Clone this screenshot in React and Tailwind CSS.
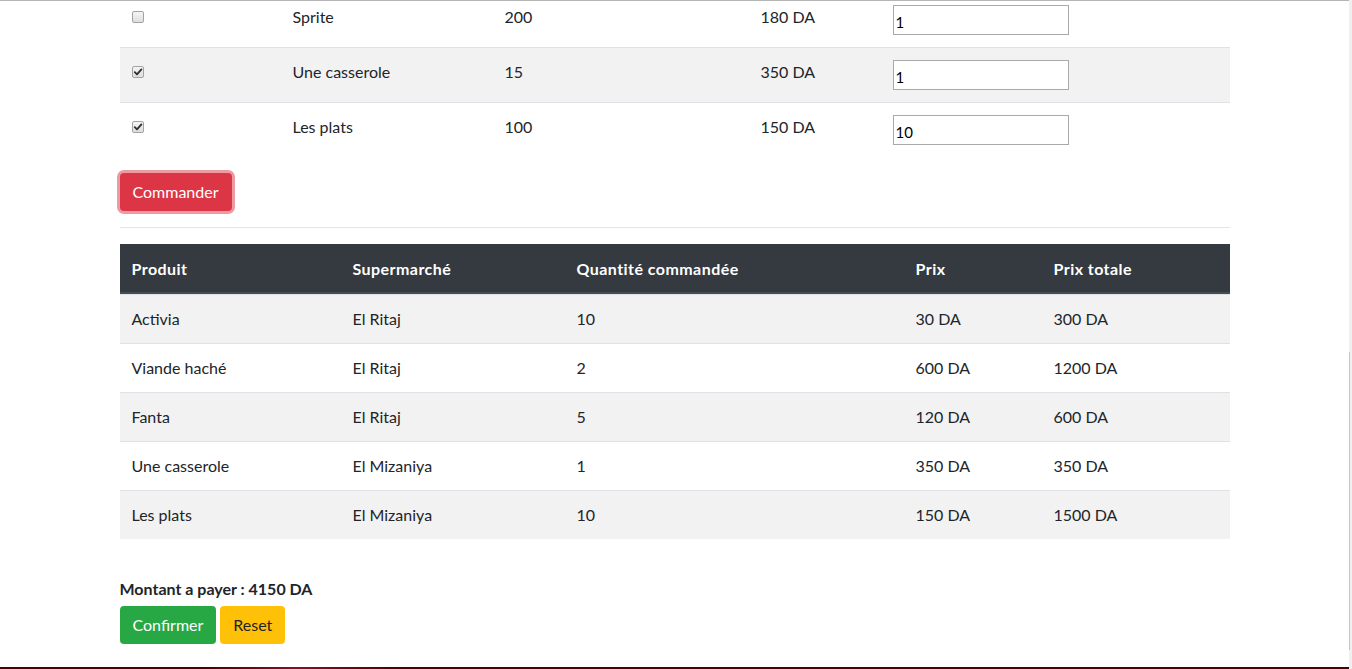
import React from "react";

const topRows = [
  { checked: false, name: "Sprite", qty: "200", price: "180 DA", val: "1", striped: false },
  { checked: true, name: "Une casserole", qty: "15", price: "350 DA", val: "1", striped: true },
  { checked: true, name: "Les plats", qty: "100", price: "150 DA", val: "10", striped: false },
];

const orders = [
  ["Activia", "El Ritaj", "10", "30 DA", "300 DA"],
  ["Viande haché", "El Ritaj", "2", "600 DA", "1200 DA"],
  ["Fanta", "El Ritaj", "5", "120 DA", "600 DA"],
  ["Une casserole", "El Mizaniya", "1", "350 DA", "350 DA"],
  ["Les plats", "El Mizaniya", "10", "150 DA", "1500 DA"],
];

function Checkbox({ checked }) {
  return (
    <span className="flex items-center justify-center w-[12px] h-[12px] rounded-[2px] border border-[#a3a3a3] bg-linear-to-b from-[#f5f5f5] to-[#dedede]">
      {checked && (
        <svg width="10" height="10" viewBox="0 0 10 10">
          <path d="M1.8 5.2 L4 7.4 L8.4 2.4" fill="none" stroke="#333" strokeWidth="1.9" strokeLinecap="round" strokeLinejoin="round" />
        </svg>
      )}
    </span>
  );
}

export default function App() {
  return (
    <div className="flex h-[669px] w-[1352px] overflow-hidden bg-white text-[16px] text-[#212529] font-['Lato',sans-serif]">
      <div className="flex flex-col flex-1 min-w-0">
        <div className="h-px bg-[#b5b5b5] shrink-0" />
        <div className="flex-1 min-h-0 overflow-hidden">
          <div className="w-[1110px] mx-auto -mt-[9px]">
            {/* top table */}
            <div className="flex flex-col">
              {topRows.map((r, i) => (
                <div
                  key={i}
                  className={`flex h-[55px] border-t border-[#dee2e6] ${r.striped ? "bg-[#f2f2f2]" : "bg-white"}`}
                >
                  <div className="w-[161px] pl-3 pt-[18px]">
                    <Checkbox checked={r.checked} />
                  </div>
                  <div className="w-[212px] px-3 pt-3 leading-6">{r.name}</div>
                  <div className="w-[256px] px-3 pt-3 leading-6">{r.qty}</div>
                  <div className="w-[132px] px-3 pt-3 leading-6">{r.price}</div>
                  <div className="flex-1 px-3 pt-3">
                    <input
                      type="text"
                      defaultValue={r.val}
                      className="block w-[176px] h-[30px] border border-[#a9a9a9] bg-white px-[2px] pt-[3px] text-[15px] text-black outline-none font-['Lato',sans-serif]"
                    />
                  </div>
                </div>
              ))}
            </div>

            <button className="mt-4 h-[38px] px-[13px] rounded-[4px] bg-[#dc3545] text-white leading-6 ring-[3px] ring-[#dc3545]/50">
              Commander
            </button>

            <div className="mt-4 mb-4 h-px bg-[#e5e5e5]" />

            {/* orders table */}
            <div className="flex flex-col">
              <div className="flex h-[50px] bg-[#343a40] border-b-2 border-[#454d55] text-white font-bold tracking-[0.45px]">
                <div className="w-[221px] px-3 pt-[13px] leading-6">Produit</div>
                <div className="w-[224px] px-3 pt-[13px] leading-6">Supermarché</div>
                <div className="w-[339px] px-3 pt-[13px] leading-6">Quantité commandée</div>
                <div className="w-[138px] px-3 pt-[13px] leading-6">Prix</div>
                <div className="flex-1 px-3 pt-[13px] leading-6">Prix totale</div>
              </div>
              {orders.map((o, i) => (
                <div
                  key={i}
                  className={`flex h-[49px] border-t border-[#dee2e6] first:border-t-0 ${i % 2 === 0 ? "bg-[#f2f2f2]" : "bg-white"}`}
                >
                  <div className="w-[221px] px-3 pt-3 leading-6">{o[0]}</div>
                  <div className="w-[224px] px-3 pt-3 leading-6">{o[1]}</div>
                  <div className="w-[339px] px-3 pt-3 leading-6">{o[2]}</div>
                  <div className="w-[138px] px-3 pt-3 leading-6">{o[3]}</div>
                  <div className="flex-1 px-3 pt-3 leading-6">{o[4]}</div>
                </div>
              ))}
            </div>

            <div className="mt-[38px] font-bold leading-6">Montant a payer : 4150 DA</div>
            <div className="mt-[5px] flex gap-1">
              <button className="h-[38px] px-[13px] rounded-[4px] bg-[#28a745] text-white leading-6">Confirmer</button>
              <button className="h-[38px] px-[13px] rounded-[4px] bg-[#ffc107] text-[#212529] leading-6">Reset</button>
            </div>
          </div>
        </div>
        <div className="h-[2px] shrink-0 bg-linear-to-r from-[#4a0008] via-[#8a1020] to-[#4a0008] from-[15%] via-[22%] to-[30%]" />
      </div>
      <div className="w-[3px] shrink-0 flex flex-col bg-[#f0f0f0]">
        <div className="h-[352px]" />
        <div className="h-[298px] border-l border-[#c6c6c6]" />
      </div>
    </div>
  );
}
